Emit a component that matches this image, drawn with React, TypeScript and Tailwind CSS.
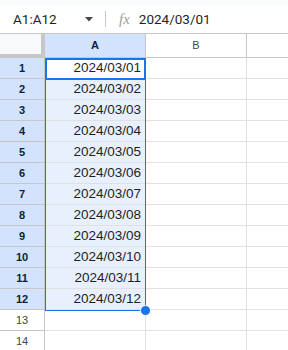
const rows = Array.from({ length: 14 }, (_, i) => i + 1);

export default function App() {
  return (
    <div className="w-[288px] h-[350px] overflow-hidden bg-white text-[#1f1f1f]" style={{ fontFamily: '"Liberation Sans", Arial, sans-serif' }}>
      {/* top strip */}
      <div className="h-[5px] bg-[#f9fbfd]" />

      {/* Formula bar */}
      <div className="h-[29px] flex items-center border-b border-[#c7c7c7] bg-white">
        <div className="w-[105px] flex items-center pl-[13px] pr-[12px] text-[13.5px]" style={{ fontFamily: 'Roboto, "Liberation Sans", sans-serif' }}>
          <span className="flex-1">A1:A12</span>
          <svg width="8" height="5" viewBox="0 0 8 5">
            <path d="M0 0h8L4 4.5z" fill="#444746" />
          </svg>
        </div>
        <div className="w-px h-[16px] bg-[#c7c7c7]" />
        <div className="pl-[13px] pr-[9px] text-[15px] italic text-[#a0a0a0]" style={{ fontFamily: '"Liberation Serif", serif' }}>
          fx
        </div>
        <div className="text-[13.5px]" style={{ fontFamily: 'Roboto, "Liberation Sans", sans-serif' }}>2024/03/01</div>
      </div>

      {/* Column headers */}
      <div className="flex h-[24px]">
        <div className="w-[45px] h-full bg-[#f8f9fa] border-r-4 border-b-4 border-[#c7c7c7] box-border" />
        <div className="w-[101px] h-full bg-[#d3e3fd] border-r border-b border-[#c7c7c7] flex items-center justify-center text-[11px] font-bold text-[#0b1f3a]">
          A
        </div>
        <div className="w-[101px] h-full bg-white border-r border-b border-[#c7c7c7] flex items-center justify-center text-[11px] text-[#444746]">
          B
        </div>
        <div className="flex-1 h-full border-b border-[#c7c7c7]" />
      </div>

      {/* Rows */}
      <div className="relative">
        {rows.map(r => {
          const sel = r <= 12;
          return (
            <div key={r} className="flex h-[21px]">
              <div
                className={`w-[45px] h-full border-r border-b border-[#c7c7c7] flex items-center justify-center text-[11px] ${sel ? 'bg-[#d3e3fd] font-bold text-[#0b1f3a]' : 'bg-white text-[#444746]'}`}
              >
                {r}
              </div>
              <div
                className={`w-[101px] h-full border-r border-b border-[#e1e1e1] flex items-center justify-end pr-[4px] text-[13.5px] ${sel ? (r === 1 ? 'bg-white' : 'bg-[#e8f0fe]') : 'bg-white'}`}
              >
                {sel ? `2024/03/${String(r).padStart(2, '0')}` : ''}
              </div>
              <div className="w-[101px] h-full border-r border-b border-[#e1e1e1]" />
              <div className="flex-1 h-full border-b border-[#e1e1e1]" />
            </div>
          );
        })}

        {/* range outline */}
        <div className="absolute left-[45px] top-0 w-[101px] h-[253px] border border-[#1a73e8] pointer-events-none" />
        {/* active cell */}
        <div className="absolute left-[45px] top-0 w-[101px] h-[22px] border-2 border-[#1a73e8] pointer-events-none" />
        {/* fill handle */}
        <div className="absolute left-[140px] top-[247px] w-[11px] h-[11px] rounded-full bg-[#1a73e8] border border-white" />
      </div>
    </div>
  );
}
